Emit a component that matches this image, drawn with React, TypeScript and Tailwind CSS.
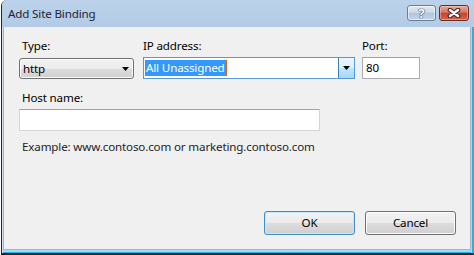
import React from "react"

const FONT = "font-['Noto_Sans','Segoe_UI',sans-serif]"
const TXT = "text-[11.6px] tracking-[-0.15px]"

function DownArrow() {
  return (
    <svg width="7" height="4" viewBox="0 0 7 4" aria-hidden>
      <path d="M0 0h7L3.5 4z" fill="#000" />
    </svg>
  )
}

function CloseGlyph() {
  return (
    <svg width="14" height="10" viewBox="0 0 14 10" aria-hidden>
      <path d="M3 2l8 6M11 2l-8 6" stroke="#43201a" strokeWidth="4.6" strokeLinecap="round" fill="none" />
      <path d="M3 2l8 6M11 2l-8 6" stroke="#ffffff" strokeWidth="2.6" strokeLinecap="round" fill="none" />
    </svg>
  )
}

function TitleBar() {
  return (
    <div className="h-[27px] shrink-0 flex items-start justify-between pl-[6px] pr-[5px] bg-[linear-gradient(#bcd2ea,#b2cbe6)] rounded-tl-[5px] rounded-tr-[5px]">
      <span className={`mt-[6px] ${TXT} leading-[15px] text-[#1b2533]`}>Add Site Binding</span>
      <div className="flex gap-[3px] mt-[5px]">
        <div className="w-[29px] h-[16px] rounded-[3px] border border-[#6b7f9b] bg-[linear-gradient(#e2eaf4,#cbd9ea_45%,#b1c5dc_50%,#c3d4e8)] shadow-[inset_0_0_0_1px_rgba(255,255,255,0.55)] flex items-center justify-center">
          <span className="text-[13px] leading-[13px] font-bold text-white [text-shadow:0_0_1px_#2c3d52,0_0_1px_#2c3d52,0_0_1px_#2c3d52]">?</span>
        </div>
        <div className="w-[30px] h-[16px] rounded-[3px] border border-[#6e2b20] bg-[linear-gradient(#eaaa9a,#d77561_45%,#c4452d_50%,#d0644b)] shadow-[inset_0_0_0_1px_rgba(255,210,200,0.45)] flex items-center justify-center">
          <CloseGlyph />
        </div>
      </div>
    </div>
  )
}

function Label({ children, indent }: { children: React.ReactNode; indent?: boolean }) {
  return (
    <div className={`h-[15px] leading-[15px] ${TXT} text-black mb-[4px] whitespace-nowrap ${indent ? "ml-[3px]" : ""}`}>
      {children}
    </div>
  )
}

function Button({ label, primary }: { label: string; primary?: boolean }) {
  const tone = primary
    ? "border-[#3c8fc8] shadow-[inset_0_0_0_1px_#c4e8f9]"
    : "border-[#707070] shadow-[inset_0_0_0_1px_#fbfbfb]"
  return (
    <div
      className={`w-[91px] h-[24px] rounded-[3px] border ${tone} bg-[linear-gradient(#f2f2f2,#ebebeb_50%,#dddddd_50%,#cfcfcf)] flex items-center justify-center ${TXT} text-black`}
    >
      {label}
    </div>
  )
}

export default function App() {
  return (
    <div className={`w-[474px] h-[255px] bg-white overflow-hidden ${FONT}`}>
      <div className="ml-px h-[255px] flex flex-col border-l border-b-2 border-[#1f2630] rounded-tl-[6px] bg-[#b7cee8]">
        <TitleBar />
        <div className="flex flex-1 min-h-0">
          <div className="w-px bg-[#d4e3f3]" />
          <div className="flex-1 flex flex-col">
            <div className="flex-1 flex flex-col border-l border-r border-b border-[#a7b4c4] bg-[#f0f0f0] pt-[11px] pl-[15px] pr-[14px] pb-[14px]">
              <div className="flex items-start">
                <div className="flex flex-col w-[115px]">
                  <Label indent>Type:</Label>
                  <div className={`mt-px h-[21px] rounded-[3px] border border-[#707070] shadow-[inset_0_0_0_1px_#fbfbfb] bg-[linear-gradient(#f2f2f2,#ebebeb_50%,#dddddd_50%,#cfcfcf)] flex items-center justify-between pl-[3px] pr-[4px] ${TXT} text-black`}>
                    <span>http</span>
                    <DownArrow />
                  </div>
                </div>
                <div className="flex flex-col w-[212px] ml-[9px]">
                  <Label>IP address:</Label>
                  <div className="h-[22px] border border-[#5a9ad4] bg-white flex items-stretch">
                    <div className="flex-1 flex items-center pl-px">
                      <span className={`bg-[#3399ff] text-white ${TXT} leading-[16px] px-px`}>All Unassigned</span>
                      <span className="w-px h-[16px] bg-[#cc6a1e]" />
                    </div>
                    <div className="w-[16px] border-l border-[#3c7fb1] bg-[linear-gradient(#eaf6fd,#d9f0fc_50%,#bee6fd_50%,#a7d9f5)] flex items-center justify-center">
                      <DownArrow />
                    </div>
                  </div>
                </div>
                <div className="flex flex-col w-[58px] ml-[7px]">
                  <Label>Port:</Label>
                  <div className={`h-[22px] border border-[#abadb3] border-t-[#a3a3a3] bg-white flex items-center pl-[3px] ${TXT} text-black`}>
                    80
                  </div>
                </div>
              </div>

              <div className="mt-[11px] flex flex-col w-[301px]">
                <Label indent>Host name:</Label>
                <div className="h-[22px] border border-[#d5d5d5] border-t-[#a3a3a3] bg-white" />
              </div>

              <div className={`mt-[8px] ml-[3px] h-[15px] leading-[15px] ${TXT} text-[#1e1e1e] whitespace-nowrap`}>
                Example: www.contoso.com or marketing.contoso.com
              </div>

              <div className="flex-1" />

              <div className="flex justify-end gap-[10px]">
                <Button label="OK" primary />
                <Button label="Cancel" />
              </div>
            </div>
            <div className="h-[2px] bg-[#a6d8f3]" />
            <div className="h-px bg-[#22b2e6]" />
          </div>
          <div className="w-px bg-[#a6d8f3]" />
          <div className="w-[2px] bg-[#22b2e6]" />
        </div>
      </div>
    </div>
  )
}
